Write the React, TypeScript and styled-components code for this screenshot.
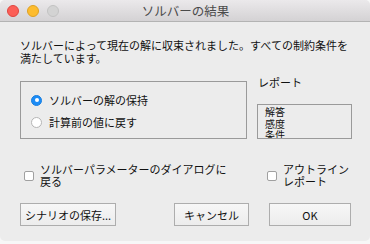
import React from 'react';
import styled, { createGlobalStyle } from 'styled-components';

const GlobalStyle = createGlobalStyle`
    html, body {
        margin: 0;
        padding: 0;
        background: #f7f7f7;
    }
    body {
        font-family: "Noto Sans CJK JP", "Noto Sans", sans-serif;
        color: #111111;
    }
`;

const App = () => {
    return (
        <>
            <GlobalStyle />
            <Window>
                <TitleBar>
                    <Lights>
                        <Light color={'#fc5f57'} edge={'#de4640'} />
                        <Light color={'#fdbc2e'} edge={'#dea123'} />
                        <Light color={'#d3d3d3'} edge={'#c2c2c2'} />
                    </Lights>
                    <Title>ソルバーの結果</Title>
                </TitleBar>
                <Body>
                    <Message>
                        ソルバーによって現在の解に収束されました。すべての制約条件を
                        <br />
                        満たしています。
                    </Message>
                    <MiddleRow>
                        <GroupBox>
                            <RadioRow>
                                <Radio checked />
                                <span>ソルバーの解の保持</span>
                            </RadioRow>
                            <RadioRow>
                                <Radio />
                                <span>計算前の値に戻す</span>
                            </RadioRow>
                        </GroupBox>
                        <ReportColumn>
                            <ReportLabel>レポート</ReportLabel>
                            <ListBox>
                                <ListItem>解答</ListItem>
                                <ListItem>感度</ListItem>
                                <ListItem>条件</ListItem>
                            </ListBox>
                        </ReportColumn>
                    </MiddleRow>
                    <CheckRow>
                        <CheckOption width={239}>
                            <CheckBox />
                            <CheckText>
                                ソルバーパラメーターのダイアログに
                                <br />
                                戻る
                            </CheckText>
                        </CheckOption>
                        <CheckOption width={80}>
                            <CheckBox />
                            <CheckText>
                                アウトライン
                                <br />
                                レポート
                            </CheckText>
                        </CheckOption>
                    </CheckRow>
                    <ButtonRow>
                        <Button width={96}>シナリオの保存...</Button>
                        <Spacer />
                        <Button width={75}>キャンセル</Button>
                        <Button width={82}>OK</Button>
                    </ButtonRow>
                </Body>
            </Window>
        </>
    );
};

export default App;

const Window = styled.div`
    width: 370px;
    height: 241px;
    background: #ececec;
    border-radius: 5px;
    overflow: hidden;
    display: flex;
    flex-direction: column;
`;

const TitleBar = styled.div`
    position: relative;
    height: 21px;
    background: linear-gradient(#ebe9eb, #d4d2d4);
    border-bottom: 1px solid #b3b3b3;
    display: flex;
    align-items: center;
    justify-content: center;
`;

const Lights = styled.div`
    position: absolute;
    left: 7px;
    top: 5px;
    display: flex;
    gap: 8px;
`;

const Light = styled.div<{ color: string; edge: string }>`
    width: 12px;
    height: 12px;
    box-sizing: border-box;
    border-radius: 50%;
    background: ${(p) => p.color};
    border: 1px solid ${(p) => p.edge};
`;

const Title = styled.div`
    font-size: 12.5px;
    color: #4a4a4a;
    line-height: 21px;
    padding-left: 1px;
`;

const Body = styled.div`
    display: flex;
    flex-direction: column;
    padding: 17px 18px 0 20px;
`;

const Message = styled.div`
    font-size: 11px;
    line-height: 13px;
    white-space: nowrap;
`;

const MiddleRow = styled.div`
    display: flex;
    align-items: flex-start;
    margin-top: 11px;
    gap: 10px;
`;

const GroupBox = styled.div`
    margin-top: 5px;
    width: 228px;
    height: 58px;
    box-sizing: border-box;
    border: 1px solid #9a9a9a;
    padding: 7px 0 0 9px;
    display: flex;
    flex-direction: column;
`;

const RadioRow = styled.div`
    display: flex;
    align-items: center;
    height: 22px;
    gap: 7px;
    font-size: 11px;
`;

const Radio = styled.div<{ checked?: boolean }>`
    width: 11px;
    height: 11px;
    box-sizing: border-box;
    border-radius: 50%;
    margin-left: 1px;
    background: ${(p) => (p.checked ? '#1c8cf6' : '#ffffff')};
    border: 1px solid ${(p) => (p.checked ? '#1a7fe0' : '#b5b5b5')};
    display: flex;
    align-items: center;
    justify-content: center;
    &::after {
        content: '';
        display: ${(p) => (p.checked ? 'block' : 'none')};
        width: 4px;
        height: 4px;
        border-radius: 50%;
        background: #ffffff;
    }
`;

const ReportColumn = styled.div`
    display: flex;
    flex-direction: column;
`;

const ReportLabel = styled.div`
    font-size: 11px;
    line-height: 13px;
    padding-left: 1px;
`;

const ListBox = styled.div`
    margin-top: 15px;
    width: 95px;
    height: 35px;
    box-sizing: border-box;
    border: 1px solid #9a9a9a;
    padding: 1px 0 0 7px;
    overflow: hidden;
`;

const ListItem = styled.div`
    font-size: 10px;
    line-height: 11.5px;
`;

const CheckRow = styled.div`
    display: flex;
    margin-top: 24px;
`;

const CheckOption = styled.div<{ width: number }>`
    width: ${(p) => p.width}px;
    flex-shrink: 0;
    display: flex;
    align-items: center;
    padding-left: 4px;
    gap: 6px;
`;

const CheckBox = styled.div`
    width: 10px;
    height: 10px;
    margin-top: 2px;
    box-sizing: border-box;
    border: 1px solid #a0a0a0;
    border-radius: 2px;
    background: #ffffff;
    flex-shrink: 0;
`;

const CheckText = styled.div`
    font-size: 11px;
    line-height: 12px;
    white-space: nowrap;
`;

const ButtonRow = styled.div`
    display: flex;
    margin-top: 16px;
    gap: 20px;
    padding-right: 1px;
`;

const Spacer = styled.div`
    flex: 1;
`;

const Button = styled.div<{ width: number }>`
    width: ${(p) => p.width}px;
    height: 23px;
    box-sizing: border-box;
    border: 1px solid #adadad;
    background: linear-gradient(#f7f7f7, #ececec);
    display: flex;
    align-items: center;
    justify-content: center;
    font-size: 11px;
    color: #111111;
`;
